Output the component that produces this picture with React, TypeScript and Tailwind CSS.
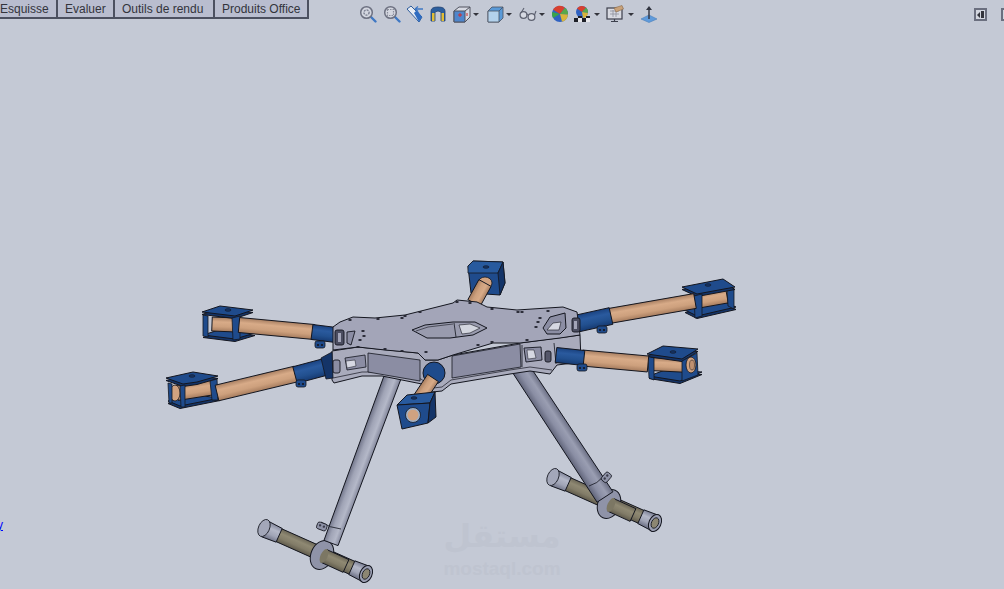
import * as React from 'react'

type Pt = [number, number]

const pts = (p: Pt[]) => p.map((a) => a.join(',')).join(' ')
const INK = '#14161f'
const BLUE = '#1f4b8c'
const BLUE_DARK = '#143468'
const BLUE_LIGHT = '#285a9e'

// tube drawn as a quad with the shading running across its width
function Tube({ id, from, to, w, w2, stops }: { id: string; from: Pt; to: Pt; w: number; w2?: number; stops: string[] }) {
	const dx = to[0] - from[0]
	const dy = to[1] - from[1]
	const len = Math.hypot(dx, dy)
	const nx = -dy / len
	const ny = dx / len
	const a = w / 2
	const b = (w2 ?? w) / 2
	const quad: Pt[] = [
		[from[0] + nx * a, from[1] + ny * a],
		[to[0] + nx * b, to[1] + ny * b],
		[to[0] - nx * b, to[1] - ny * b],
		[from[0] - nx * a, from[1] - ny * a],
	]
	return (
		<>
			<linearGradient
				id={id}
				gradientUnits="userSpaceOnUse"
				x1={from[0] - nx * a}
				y1={from[1] - ny * a}
				x2={from[0] + nx * a}
				y2={from[1] + ny * a}
			>
				{stops.map((s, i) => (
					<stop key={i} offset={i / (stops.length - 1)} stopColor={s} />
				))}
			</linearGradient>
			<polygon points={pts(quad)} fill={`url(#${id})`} stroke={INK} strokeWidth={1} />
		</>
	)
}

const TAN = ['#a87f62', '#d8ab88', '#cda07d', '#a67c5e']
const SLEEVE = ['#1a4280', '#2a5a9e', '#22508f', '#163a72']
const OLIVE = ['#6b6656', '#8f8973', '#827c68', '#5f5a4b']
const STEEL = ['#7f8398', '#b4b8c8', '#a0a4b6', '#6d7186']

// mount plate with a bit of thickness under it
function Plate({ p }: { p: Pt[] }) {
	const under = p.map(([x, y]): Pt => [x, y + 2.5])
	return (
		<>
			<polygon points={pts(under)} fill={BLUE_DARK} stroke={INK} strokeWidth={1} strokeLinejoin="round" />
			<polygon points={pts(p)} fill={BLUE} stroke={INK} strokeWidth={1} strokeLinejoin="round" />
		</>
	)
}

function Clamp({ x, y }: { x: number; y: number }) {
	return (
		<g>
			<rect x={x - 5} y={y - 3} width={10} height={7} rx={2} fill={BLUE} stroke={INK} strokeWidth={0.8} />
			<circle cx={x - 2} cy={y + 1} r={1.1} fill={INK} />
			<circle cx={x + 2} cy={y + 1} r={1.1} fill={INK} />
		</g>
	)
}

function LegClamp({ x, y, r }: { x: number; y: number; r: number }) {
	return (
		<g transform={`rotate(${r} ${x} ${y})`}>
			<rect x={x - 5} y={y - 3} width={10} height={7} rx={2} fill="#8f93a8" stroke={INK} strokeWidth={0.8} />
			<circle cx={x - 2} cy={y} r={1.2} fill="#3a3c4a" />
			<circle cx={x + 2} cy={y} r={1.2} fill="#3a3c4a" />
		</g>
	)
}

function Skid({ id, from, to, clamp, cap }: { id: string; from: Pt; to: Pt; clamp: Pt; cap: number }) {
	const dx = to[0] - from[0]
	const dy = to[1] - from[1]
	const at = (t: number): Pt => [from[0] + dx * t, from[1] + dy * t]
	return (
		<>
			<Tube id={`${id}a`} from={from} to={to} w={14} stops={OLIVE} />
			<Tube id={`${id}b`} from={from} to={at(cap)} w={17} w2={15} stops={STEEL} />
			<Tube id={`${id}c`} from={at(1 - cap)} to={to} w={15} w2={17} stops={STEEL} />
			<ellipse cx={from[0] - 1} cy={from[1] - 1} rx={5.5} ry={9} transform={`rotate(24 ${from[0] - 1} ${from[1] - 1})`} fill="#a3a7b9" stroke={INK} strokeWidth={0.8} />
			<ellipse cx={to[0]} cy={to[1]} rx={6} ry={9} transform={`rotate(24 ${to[0]} ${to[1]})`} fill="#9a9eb2" stroke={INK} strokeWidth={1} />
			<ellipse cx={to[0]} cy={to[1]} rx={3.5} ry={5.5} transform={`rotate(24 ${to[0]} ${to[1]})`} fill="#8c8672" stroke={INK} strokeWidth={0.8} />
			<ellipse cx={clamp[0]} cy={clamp[1]} rx={11} ry={15} transform={`rotate(24 ${clamp[0]} ${clamp[1]})`} fill="#8f93a8" stroke={INK} strokeWidth={1} />
			<Tube id={`${id}d`} from={[clamp[0] + 2, clamp[1] + 1]} to={[clamp[0] + 24, clamp[1] + 11]} w={14} stops={OLIVE} />
			<ellipse cx={clamp[0] + 2} cy={clamp[1] + 1} rx={3.5} ry={7.5} transform={`rotate(24 ${clamp[0] + 2} ${clamp[1] + 1})`} fill="#7c7764" />
		</>
	)
}

function Frame() {
	return (
		<>
			{/* lower plate and side walls */}
			<polygon
				points="332,351 332,380 334,383 362,376 382,376 422,384 432,392 442,391 451,384 510,374 530,371 550,374 557,365 581,362 580,335 520,343 453,355 438,360 425,360 418,353 358,347"
				fill="#a9abbc"
				stroke={INK}
				strokeWidth={1}
			/>
			<polyline points="333,378 362,372 382,372 421,379 433,388 442,387 451,380 510,370 530,367 552,370" fill="none" stroke={INK} strokeWidth={0.7} />
			<polygon points="368,353 420,360 420,381 368,372" fill="#8b8da3" stroke={INK} strokeWidth={0.8} />
			<polygon points="452,356 520,344 521,367 452,378" fill="#8b8da3" stroke={INK} strokeWidth={0.8} />
			<polygon points="345,358 365,355 366,367 347,370" fill="#8b8da3" stroke={INK} strokeWidth={0.8} />
			<polygon points="346,361 355,360 356,366 347,368" fill="#d6d8e2" stroke={INK} strokeWidth={0.5} />
			<rect x={333} y={360} width={7} height={13} rx={2} fill="#8b8da3" stroke={INK} strokeWidth={0.9} />
			<polygon points="524,348 541,347 542,360 526,362" fill="#8b8da3" stroke={INK} strokeWidth={0.9} />
			<polygon points="527,350 534,350 536,358 528,359" fill="#d6d8e2" stroke={INK} strokeWidth={0.5} />
			<rect x={545} y={351} width={6} height={11} rx={2} fill="#55576a" stroke={INK} strokeWidth={0.9} />
			<line x1={522} y1={345} x2={522} y2={367} stroke={INK} strokeWidth={0.8} />
			<line x1={554} y1={343} x2={556} y2={364} stroke={INK} strokeWidth={0.8} />

			{/* upper plate */}
			<polygon
				points="333,327 340,322 353,317 375,318 405,315 453,303 457,300 477,302 487,307 517,310 563,307 577,312 580,335 560,338 520,343 493,343 453,355 438,360 425,360 418,353 385,350 358,347 333,350"
				fill="#a3a5b8"
				stroke={INK}
				strokeWidth={1}
				strokeLinejoin="round"
			/>
			{/* centre opening */}
			<polygon points="412,330 425,325 453,322 475,322 487,328 473,335 450,338 427,338" fill="#999bae" stroke={INK} strokeWidth={1} strokeLinejoin="round" />
			<polygon points="459,325 470,324 480,328 470,333 462,334" fill="#d2d5de" stroke={INK} strokeWidth={0.6} />
			<polyline points="416,331 428,327 453,324" fill="none" stroke={INK} strokeWidth={0.6} />
			<line x1={454} y1={323} x2={456} y2={337} stroke={INK} strokeWidth={0.8} />

			{/* rear corner cut-outs */}
			<polygon points="543,328 550,317 565,313 566,328 560,334 547,334" fill="#8b8da3" stroke={INK} strokeWidth={1} strokeLinejoin="round" />
			<polygon points="547,330 553,323 561,322 559,330" fill="#d6d8e2" stroke={INK} strokeWidth={0.6} />
			<rect x={572} y={318} width={8} height={14} rx={2} fill="#4b4d60" stroke={INK} strokeWidth={0.9} />
			<rect x={574} y={321} width={3} height={8} fill="#a3a5b8" />
			<rect x={335} y={330} width={9} height={15} rx={2} fill="#4b4d60" stroke={INK} strokeWidth={0.9} />
			<rect x={338} y={333} width={3} height={9} fill="#a3a5b8" />
			<polygon points="347,332 355,331 351,345 347,343" fill="#8b8da3" stroke={INK} strokeWidth={0.9} />

			{/* holes and screws */}
			{([[363, 331], [364, 336], [360, 340], [538, 322], [536, 327], [540, 318], [378, 319], [350, 320], [405, 316], [402, 318], [420, 312], [457, 302], [470, 303], [492, 309], [518, 312], [522, 312], [548, 311], [385, 349], [402, 351], [426, 352], [358, 347], [492, 342], [478, 345], [527, 340]] as Pt[]).map(([x, y], i) => (
				<ellipse key={i} cx={x} cy={y} rx={1.8} ry={1} fill="#23242f" />
			))}
		</>
	)
}

function Drone() {
	return (
		<svg viewBox="0 0 1004 589" className="absolute inset-0 w-[1004px] h-[589px]">
			{/* landing gear */}
			<Skid id="skL" from={[265, 529]} to={[366, 574]} clamp={[322, 555]} cap={0.14} />
			<Skid id="skR" from={[554, 478]} to={[655, 523]} clamp={[609, 504]} cap={0.14} />
			<Tube id="legL" from={[393, 376]} to={[331, 543]} w={17} w2={15} stops={STEEL} />
			<path d="M321 522 Q330 528 341 529" fill="none" stroke={INK} strokeWidth={0.8} />
			<Tube id="legR" from={[519, 366]} to={[605, 497]} w={18} w2={19} stops={['#6d7186', '#9a9eb2', '#8a8ea4', '#63677c']} />
			<path d="M589 486 Q597 484 604 476" fill="none" stroke={INK} strokeWidth={0.8} />
			<LegClamp x={322} y={526} r={20} />
			<LegClamp x={606} y={477} r={-50} />

			{/* back arm */}
			<polygon points="468,266 473,261 503,262 505,283 500,295 471,293" fill={BLUE} stroke={INK} strokeWidth={1} strokeLinejoin="round" />
			<polygon points="468,266 473,261 503,262 498,273 468,273" fill={BLUE_LIGHT} stroke={INK} strokeWidth={0.8} strokeLinejoin="round" />
			<polygon points="498,273 503,262 505,283 500,295" fill={BLUE_DARK} stroke={INK} strokeWidth={0.8} />
			<ellipse cx={486} cy={267} rx={3} ry={1.3} fill={BLUE_DARK} stroke={INK} strokeWidth={0.6} />
			<ellipse cx={485} cy={283} rx={7} ry={6} fill="#d0a280" stroke={INK} strokeWidth={0.8} />
			<Tube id="armB" from={[485, 283]} to={[474, 303]} w={14} stops={TAN} />

			{/* rear left arm */}
			<Plate p={[[203, 335], [222, 329], [255, 333], [235, 339]]} />
			<Tube id="armLB2" from={[212, 324]} to={[236, 325]} w={14} stops={TAN} />
			<polygon points="203,315 208,316 208,337 203,336" fill={BLUE} stroke={INK} strokeWidth={0.8} />
			<Plate p={[[202, 312], [220, 306], [253, 310], [235, 316]]} />
			<polygon points="232,318 240,316 240,339 233,340" fill={BLUE} stroke={INK} strokeWidth={0.8} />
			<ellipse cx={228} cy={310} rx={3} ry={1.3} fill={BLUE_DARK} stroke={INK} strokeWidth={0.6} />
			<Tube id="armLB" from={[239, 325]} to={[314, 332]} w={15} stops={TAN} />
			<Tube id="slLB" from={[312, 332]} to={[336, 335]} w={15} stops={SLEEVE} />
			<Clamp x={320} y={344} />

			{/* rear right arm */}
			<Plate p={[[685, 310], [722, 301], [736, 307], [697, 316]]} />
			<Tube id="armRB2" from={[693, 302]} to={[727, 296]} w={14} stops={TAN} />
			<polygon points="727,287 734,289 734,309 728,306" fill={BLUE} stroke={INK} strokeWidth={0.8} />
			<Plate p={[[682, 287], [723, 279], [735, 287], [697, 294]]} />
			<polygon points="694,296 702,294 702,316 695,318" fill={BLUE} stroke={INK} strokeWidth={0.8} />
			<ellipse cx={708} cy={285} rx={3} ry={1.3} fill={BLUE_DARK} stroke={INK} strokeWidth={0.6} />
			<Tube id="armRB" from={[609, 316]} to={[695, 301]} w={15} stops={TAN} />
			<Tube id="slRB" from={[575, 324]} to={[611, 316]} w={17} stops={SLEEVE} />
			<Clamp x={602} y={329} />

			<Frame />

			{/* front right arm */}
			<Plate p={[[649, 376], [665, 370], [702, 372], [680, 381]]} />
			<Tube id="armRF2" from={[650, 364]} to={[690, 366]} w={13} stops={TAN} />
			<polygon points="648,356 654,358 654,380 649,378" fill={BLUE} stroke={INK} strokeWidth={0.8} />
			<Plate p={[[647, 354], [663, 346], [698, 349], [682, 359]]} />
			<polygon points="682,361 697,353 698,375 682,381" fill={BLUE} stroke={INK} strokeWidth={0.8} />
			<ellipse cx={673} cy={352} rx={3} ry={1.3} fill={BLUE_DARK} stroke={INK} strokeWidth={0.6} />
			<ellipse cx={691} cy={365} rx={5} ry={8} fill="#d0a280" stroke={INK} strokeWidth={0.8} />
			<ellipse cx={692} cy={365} rx={2.5} ry={5} fill="#bf9070" stroke={INK} strokeWidth={0.5} />
			<Tube id="armRF" from={[582, 358]} to={[648, 364]} w={16} stops={TAN} />
			<Tube id="slRF" from={[556, 355]} to={[584, 358]} w={15} stops={SLEEVE} />
			<Clamp x={582} y={367} />

			{/* front left arm */}
			<Plate p={[[168, 401], [195, 395], [220, 398], [180, 406]]} />
			<Tube id="armLF2" from={[177, 393]} to={[215, 387]} w={15} stops={TAN} />
			<ellipse cx={175} cy={393} rx={5} ry={8} fill="#d0a280" stroke={INK} strokeWidth={0.8} />
			<polygon points="168,383 172,384 172,403 169,403" fill={BLUE} stroke={INK} strokeWidth={0.8} />
			<Plate p={[[166, 378], [193, 372], [218, 376], [197, 382], [183, 384]]} />
			<polygon points="180,386 185,385 185,407 181,407" fill={BLUE} stroke={INK} strokeWidth={0.8} />
			<polygon points="210,381 217,379 218,400 212,400" fill={BLUE} stroke={INK} strokeWidth={0.8} />
			<ellipse cx={192} cy={376} rx={3} ry={1.3} fill={BLUE_DARK} stroke={INK} strokeWidth={0.6} />
			<Tube id="armLF" from={[217, 393]} to={[296, 374]} w={16} stops={TAN} />
			<Tube id="slLF" from={[295, 375]} to={[325, 367]} w={17} stops={SLEEVE} />
			<Clamp x={301} y={383} />
			<polygon points="321,358 332,352 333,378 326,379" fill={BLUE_DARK} stroke={INK} strokeWidth={0.8} />

			{/* front arm */}
			<ellipse cx={434} cy={373} rx={11} ry={11} fill={BLUE} stroke={INK} strokeWidth={1} />
			<Tube id="armF" from={[433, 378]} to={[417, 402]} w={13} stops={TAN} />
			<polygon points="397,405 407,395 435,392 430,403" fill={BLUE_LIGHT} stroke={INK} strokeWidth={1} strokeLinejoin="round" />
			<polygon points="397,405 430,403 428,423 402,429" fill={BLUE} stroke={INK} strokeWidth={1} strokeLinejoin="round" />
			<polygon points="430,403 435,392 436,417 428,423" fill={BLUE_DARK} stroke={INK} strokeWidth={1} strokeLinejoin="round" />
			<ellipse cx={414} cy={398} rx={3} ry={1.3} fill={BLUE_DARK} stroke={INK} strokeWidth={0.6} />
			<circle cx={413} cy={415} r={7.5} fill="#9db0c8" stroke={INK} strokeWidth={0.8} />
			<circle cx={413} cy={415} r={5.5} fill="#d0a280" />
		</svg>
	)
}

const Shell = ({ children }: { children: React.ReactNode }) => (
	<svg viewBox="0 0 18 18" className="w-[18px] h-[18px]">
		{children}
	</svg>
)

const Lens = ({ inner }: { inner: React.ReactNode }) => (
	<Shell>
		<line x1={11} y1={11} x2={16.5} y2={16.5} stroke="#3f78c4" strokeWidth={2.4} strokeLinecap="round" />
		<circle cx={7.5} cy={7.5} r={5.8} fill="#d4d7e0" stroke="#6d7181" strokeWidth={1.5} />
		{inner}
	</Shell>
)

const icons: { key: string; cls: string; arrow?: string; node: React.ReactNode }[] = [
	{
		key: 'zoomFit',
		cls: 'ml-[50px]',
		node: <Lens inner={<circle cx={7.5} cy={7.5} r={2.6} fill="none" stroke="#7a7f90" strokeWidth={1.4} strokeDasharray="2 1" />} />,
	},
	{
		key: 'zoomArea',
		cls: 'ml-[6px]',
		node: <Lens inner={<rect x={4.5} y={4.5} width={6} height={6} fill="none" stroke="#8a8e9c" strokeWidth={1.2} strokeDasharray="1.5 1" />} />,
	},
	{
		key: 'prevView',
		cls: 'ml-[5px]',
		node: (
			<Shell>
				<path d="M1 4 L5 1 L16 12 L13 17 Z" fill="#e8ecf2" stroke="#2d5c9c" strokeWidth={1} />
				<path d="M8 8 L11 5 L16 12 L13 17 Z" fill="#2f6cc0" />
				<path d="M9 4 H17 M9 4 L12 1.5 M9 4 L12 6.5" fill="none" stroke="#3f78c4" strokeWidth={1.3} />
			</Shell>
		),
	},
	{
		key: 'section',
		cls: 'ml-[5px]',
		node: (
			<Shell>
				<path d="M2 16 V6 Q2 2 9 2 Q16 2 16 6 V16 H12 V7 Q9 5 6 7 V16 Z" fill="#2c5f9e" stroke="#1f3f70" strokeWidth={0.8} />
				<path d="M3 8 H5.5 V16 H3 Z M12.5 8 H15 V16 H12.5 Z" fill="#e2bd34" />
			</Shell>
		),
	},
	{
		key: 'orient',
		cls: 'ml-[6px]',
		arrow: 'ml-[2px]',
		node: (
			<Shell>
				<path d="M1 6 L6 2 H17 V12 L12 17 H1 Z" fill="#d6d9e2" stroke="#50535f" strokeWidth={1} />
				<path d="M1 6 H12 V17 H1 Z" fill="#4f86cc" stroke="#50535f" strokeWidth={1} />
				<path d="M12 6 L17 2" stroke="#50535f" />
				<path d="M7 8 V12 M5 10 H9 M14 8 V11" stroke="#d42a2a" strokeWidth={1} />
			</Shell>
		),
	},
	{
		key: 'display',
		cls: 'ml-[7px]',
		arrow: 'ml-[2px]',
		node: (
			<Shell>
				<path d="M2 6 L6 2 H17 V13 L13 17 H2 Z" fill="#5a9ad8" stroke="#4a5060" strokeWidth={0.8} />
				<path d="M2 6 H13 V17 H2 Z" fill="#b4d2ec" stroke="#4a5060" strokeWidth={0.8} />
				<path d="M13 6 L17 2" stroke="#4a5060" strokeWidth={0.8} />
			</Shell>
		),
	},
	{
		key: 'glasses',
		cls: 'ml-[7px]',
		arrow: 'ml-[2px]',
		node: (
			<Shell>
				<circle cx={4.5} cy={10} r={3.4} fill="#d6d9e2" stroke="#5d6170" strokeWidth={1.2} />
				<circle cx={12.5} cy={12} r={3.4} fill="#d6d9e2" stroke="#5d6170" strokeWidth={1.2} />
				<path d="M7.5 9 Q9 9 9.5 10.5 M2 8 L5 3 M15.5 10 L17 6" fill="none" stroke="#5d6170" strokeWidth={1.1} />
			</Shell>
		),
	},
	{
		key: 'appearance',
		cls: 'ml-[6px]',
		node: (
			<Shell>
				<circle cx={9} cy={9} r={8} fill="#2f62c2" />
				<path d="M9 9 L2 4.5 A8 8 0 0 1 14 2.7 Z" fill="#d8402f" />
				<path d="M9 9 L14 2.7 A8 8 0 0 1 17 9.5 Z" fill="#5aa84a" />
				<path d="M9 9 L17 9.5 A8 8 0 0 1 11 16.8 Z" fill="#d9b53a" />
				<path d="M9 9 L1.2 7 A8 8 0 0 0 2 13 Z" fill="#3aa24a" />
			</Shell>
		),
	},
	{
		key: 'scene',
		cls: 'ml-[4px]',
		arrow: 'ml-[3px]',
		node: (
			<Shell>
				<circle cx={9} cy={7} r={6} fill="#2f62c2" />
				<path d="M9 7 L4 3.5 A6 6 0 0 1 13 2.5 Z" fill="#d8402f" />
				<path d="M9 7 L13 2.5 A6 6 0 0 1 15 8 Z" fill="#5aa84a" />
				<path d="M9 7 L15 8 A6 6 0 0 1 10 13 Z" fill="#d9b53a" />
				<path d="M1 13 H5 V17 H1 Z M9 13 H13 V17 H9 Z M5 11 H9 V13 H5 Z M13 11 H17 V13 H13 Z" fill="#1e2028" />
				<path d="M5 13 H9 V17 H5 Z M13 13 H17 V17 H13 Z" fill="#e8e8ec" />
			</Shell>
		),
	},
	{
		key: 'render',
		cls: 'ml-[6px]',
		arrow: 'ml-[4px]',
		node: (
			<Shell>
				<rect x={1} y={3} width={15} height={11} fill="#d8dae2" stroke="#3c3f4c" strokeWidth={1.2} />
				<path d="M4 6 L13 6 M4 9 L13 9 M7 5 L7 12 M10 5 L10 12" stroke="#8d8f9c" strokeWidth={0.8} />
				<path d="M5 16.5 H12 M8.5 14 V16.5" stroke="#3c3f4c" strokeWidth={1.2} />
				<path d="M8 3 L16 0.5 L17.5 4 L10 7 Z" fill="#c9a27a" stroke="#8a6a4a" strokeWidth={0.6} />
			</Shell>
		),
	},
	{
		key: 'view3d',
		cls: 'ml-[6px]',
		node: (
			<Shell>
				<path d="M1 14 L9 10 L17 14 L9 17.5 Z" fill="#5f9bdc" stroke="#4a7db8" strokeWidth={0.6} />
				<path d="M9 14 V3" stroke="#30333f" strokeWidth={1.4} />
				<path d="M6 5 L9 1 L12 5 Z" fill="#30333f" />
			</Shell>
		),
	},
]

const tabs = [
	{ label: 'Esquisse', cls: 'w-[58px] pl-0' },
	{ label: 'Evaluer', cls: 'w-[57px] pl-[7px]' },
	{ label: 'Outils de rendu', cls: 'w-[100px] pl-[7px]' },
	{ label: 'Produits Office', cls: 'w-[94px] pl-[7px]' },
]

export default function App() {
	return (
		<div className="relative w-[1004px] h-[589px] overflow-hidden bg-[#c4c9d5] font-['Liberation_Sans',Arial,sans-serif]">
			<Drone />

			<div className="relative flex items-start">
				<div className="flex w-[309px] h-[19px] border-b-2 border-[#4c5060]">
					{tabs.map((t) => (
						<div
							key={t.label}
							className={`${t.cls} h-[17px] bg-[#b9bdcf] border-r-2 border-[#4c5060] text-[12px] leading-[19px] text-[#33343c] whitespace-nowrap`}
						>
							{t.label}
						</div>
					))}
				</div>

				<div className="flex items-center pt-[5px]">
					{icons.map((ic) => (
						<React.Fragment key={ic.key}>
							<div className={ic.cls}>{ic.node}</div>
							{ic.arrow && (
								<div className={`${ic.arrow} w-0 h-0 border-x-[3px] border-x-transparent border-t-[3px] border-t-[#33343c]`} />
							)}
						</React.Fragment>
					))}
				</div>

				<div className="ml-auto flex gap-[14px] pt-[8px] -mr-[10px]">
					<div className="flex items-center justify-center gap-[1px] w-[13px] h-[13px] border-2 border-[#6b6f7f] bg-[#d3d6df]">
						<div className="w-0 h-0 border-y-[3px] border-y-transparent border-r-[3px] border-r-[#33343c]" />
						<div className="w-[3px] h-[7px] bg-[#33343c]" />
					</div>
					<div className="w-[13px] h-[13px] border-2 border-[#6b6f7f] bg-[#d3d6df]" />
				</div>
			</div>

			<a className="absolute left-[-3px] top-[519px] text-[12px] leading-[13px] text-[#0000ff] underline">y</a>

			<div className="absolute left-[442px] top-[512px] w-[120px] text-center text-[#bfc4d0]">
				<div className="text-[32px] leading-[48px] font-bold font-['DejaVu_Sans',sans-serif]">مستقل</div>
				<div className="text-[19px] leading-[18px] font-bold">mostaql.com</div>
			</div>
		</div>
	)
}
